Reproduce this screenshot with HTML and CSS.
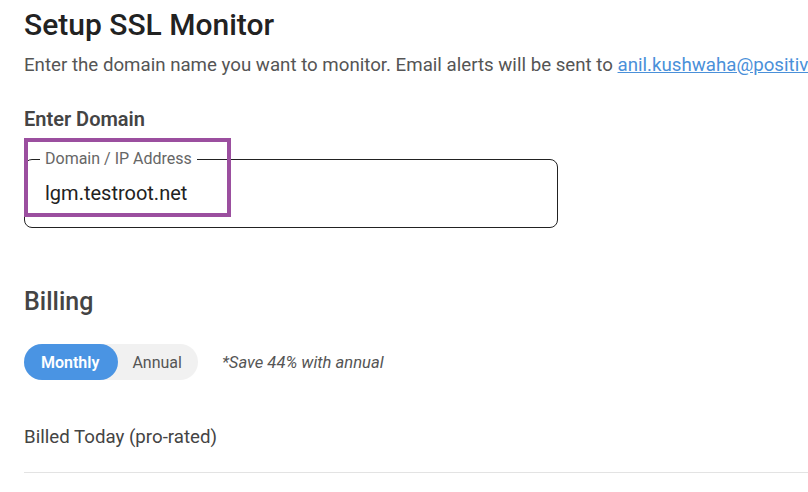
FILE: index.html
```html
<!DOCTYPE html>
<html lang="en">
<head>
    <meta charset="UTF-8">
    <meta name="viewport" content="width=device-width, initial-scale=1.0">
    <title>Setup SSL Monitor</title>
    <link rel="stylesheet" href="styles.css">
</head>
<body>

    <div class="page">
        <!-- Header -->
        <h1 class="title">Setup SSL Monitor</h1>
        <p class="subtitle">Enter the domain name you want to monitor. Email alerts will be sent to <a href="#">anil.kushwaha@positiv</a></p>

        <!-- Domain -->
        <h3 class="section-label">Enter Domain</h3>
        <div class="field-wrap">
            <fieldset class="field">
                <legend>Domain / IP Address</legend>
                <input type="text" value="lgm.testroot.net">
            </fieldset>
            <div class="highlight"></div>
        </div>

        <!-- Billing -->
        <h2 class="billing-title">Billing</h2>
        <div class="billing-row">
            <div class="toggle">
                <span class="toggle-btn active">Monthly</span>
                <span class="toggle-btn">Annual</span>
            </div>
            <span class="save-note">*Save 44% with annual</span>
        </div>

        <div class="billed-today">Billed Today (pro-rated)</div>
    </div>

</body>
</html>
```

FILE: styles.css
```css
body {
    font-family: Roboto, "Noto Sans", Arial, sans-serif;
    background-color: #fff;
    margin: 0;
    padding: 0;
    color: #444;
}

.page {
    padding: 0 0 0 24px;
    overflow: hidden;
}

/* Header */
.title {
    font-size: 30px;
    font-weight: 500;
    color: #222;
    margin: 5px 0 0 0;
    line-height: 40px;
}

.subtitle {
    font-size: 18.7px;
    color: #555;
    margin: 8px 0 0 0;
    line-height: 24px;
    white-space: nowrap;
}

.subtitle a {
    color: #4a90d9;
}

/* Domain field */
.section-label {
    font-size: 20px;
    font-weight: 600;
    color: #444;
    margin: 30px 0 0 0;
    line-height: 24px;
}

.field-wrap {
    position: relative;
    width: 534px;
    margin-top: 19px;
}

.field {
    border: 1px solid #222;
    border-radius: 8px;
    margin: 0;
    padding: 0 20px 0 20px;
    height: 78px;
    box-sizing: border-box;
}

.field legend {
    font-size: 16px;
    color: #666;
    padding: 0 5px;
    margin-left: -5px;
    line-height: 18px;
}

.field input {
    border: none;
    outline: none;
    font-family: inherit;
    font-size: 20px;
    color: #222;
    padding: 0;
    margin-top: 13px;
    width: 100%;
    background: transparent;
}

/* Annotation box drawn over the field */
.highlight {
    position: absolute;
    left: 0;
    top: -12px;
    width: 207px;
    height: 79px;
    border: 4px solid #9b4f9f;
    box-sizing: border-box;
}

/* Billing */
.billing-title {
    font-size: 25px;
    font-weight: 500;
    color: #444;
    margin: 58px 0 0 0;
    line-height: 32px;
}

.billing-row {
    display: flex;
    align-items: center;
    gap: 24px;
    margin-top: 26px;
}

.toggle {
    display: flex;
    background-color: #f1f1f1;
    border-radius: 18px;
    height: 36px;
}

.toggle-btn {
    display: flex;
    align-items: center;
    padding: 0 16px 0 14px;
    border-radius: 18px;
    font-size: 16px;
    color: #555;
}

.toggle-btn.active {
    background-color: #4a94e3;
    color: #fff;
    font-weight: 600;
    padding: 0 19px 0 17px;
}

.save-note {
    font-size: 16.6px;
    font-style: italic;
    color: #555;
}

.billed-today {
    font-size: 18.7px;
    color: #444;
    margin-top: 46px;
    padding-bottom: 24px;
    border-bottom: 1px solid #e3e3e3;
}
```
